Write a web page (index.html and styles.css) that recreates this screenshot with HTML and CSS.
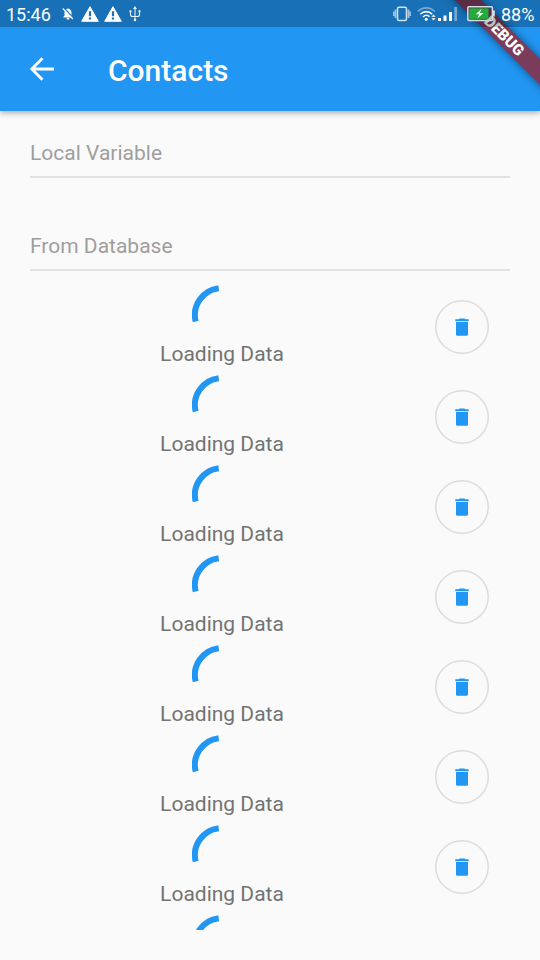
FILE: index.html
```
<!DOCTYPE html>
<html lang="en">
<head>
<meta charset="utf-8">
<title>Contacts</title>
<link rel="stylesheet" href="styles.css">
</head>
<body>
<svg class="defs" width="0" height="0">
  <symbol id="arc" viewBox="0 0 60 60"><path d="M3.7 36.6A27 27 0 0 1 26.7 3.2" fill="none" stroke="#2196f3" stroke-width="6"/></symbol>
  <symbol id="trash" viewBox="0 0 54 54"><circle cx="27" cy="27" r="26.250" fill="none" stroke="#dcdcdc" stroke-width="1.500"/><path d="M21 22h12v12.200q0 1.500-1.500 1.500h-9q-1.500 0-1.500-1.500z" fill="#2196f3"/><path d="M20.300 19.200h3.400l.8-.8h5l.8.8h3.400v2H20.300z" fill="#2196f3"/></symbol>
  <symbol id="warn" viewBox="0 0 18 16"><path d="M9 .7 17.300 15.300H.7z" fill="#fff" stroke="#fff" stroke-width="1" stroke-linejoin="round"/><path d="M9 5.200v5M9 11.600v2" stroke="#1971b6" stroke-width="2.200"/></symbol>
</svg>
<div class="screen">
  <header class="appbar">
    <svg class="back" viewBox="0 0 36 36"><path d="M30 18H8M18.500 7.300 7.800 18 18.500 28.700" fill="none" stroke="#fff" stroke-width="2.800"/></svg>
    <h1 class="title">Contacts</h1>
  </header>
  <main class="body">
    <div class="field first">Local Variable</div>
    <div class="field second">From Database</div>
    <div class="list">
      <div class="row"><div class="loading"><svg class="spinner"><use href="#arc"/></svg><span>Loading Data</span></div><button class="delete"><svg><use href="#trash"/></svg></button></div>
      <div class="row"><div class="loading"><svg class="spinner"><use href="#arc"/></svg><span>Loading Data</span></div><button class="delete"><svg><use href="#trash"/></svg></button></div>
      <div class="row"><div class="loading"><svg class="spinner"><use href="#arc"/></svg><span>Loading Data</span></div><button class="delete"><svg><use href="#trash"/></svg></button></div>
      <div class="row"><div class="loading"><svg class="spinner"><use href="#arc"/></svg><span>Loading Data</span></div><button class="delete"><svg><use href="#trash"/></svg></button></div>
      <div class="row"><div class="loading"><svg class="spinner"><use href="#arc"/></svg><span>Loading Data</span></div><button class="delete"><svg><use href="#trash"/></svg></button></div>
      <div class="row"><div class="loading"><svg class="spinner"><use href="#arc"/></svg><span>Loading Data</span></div><button class="delete"><svg><use href="#trash"/></svg></button></div>
      <div class="row"><div class="loading"><svg class="spinner"><use href="#arc"/></svg><span>Loading Data</span></div><button class="delete"><svg><use href="#trash"/></svg></button></div>
      <div class="row partial"><div class="loading"><svg class="spinner"><use href="#arc"/></svg></div></div>
    </div>
  </main>
  <div class="banner">DEBUG</div>
  <div class="status">
    <span class="time">15:46</span>
    <svg class="bell" viewBox="0 0 12 14"><path d="M6 1.500c2.400.3 3.500 2 3.500 4.300v2.700l1.500 2h-10l1.500-2V5.800c0-2.300 1.100-4 3.500-4.300z" fill="#fff"/><path d="M4.700 11.700h2.600" stroke="#fff" stroke-width="1.500"/><path d="M1.700.8 11.700 11.300" stroke="#1971b6" stroke-width="1.300"/><path d="M.8 1.500 10.800 12" stroke="#fff" stroke-width="1.200"/></svg>
    <svg class="warn"><use href="#warn"/></svg>
    <svg class="warn next"><use href="#warn"/></svg>
    <svg class="usb" viewBox="0 0 12 16"><path d="M6 2v12M1.500 5v3.500q0 2 2 2H6M10.500 4.500v4q0 2-2 2H6" fill="none" stroke="#e6f0f8" stroke-width="1.100"/><path d="M6 0 8 3H4zM.5 4.200h2v2H.5zM9.500 4.200h2v2H9.500z" fill="#e6f0f8"/><circle cx="6" cy="14" r="1.300" fill="#e6f0f8"/></svg>
    <svg class="vibrate" viewBox="0 0 18 16"><rect x="4.500" y="1.200" width="9" height="13.200" rx="1.500" fill="none" stroke="#d4e4f2" stroke-width="1.500"/><path d="M2.500 3.500v8.500M15.500 3.500v8.500" stroke="#9fc3e1" stroke-width="1.800"/><path d="M.9 5.500v4.500M17.100 5.500v4.500" stroke="#b5d0e7" stroke-width="1.400"/></svg>
    <svg class="wifi" viewBox="0 0 20 16"><path d="M.8 5.500C5.500.6 13 .6 17.800 5.500" fill="none" stroke="#75aad3" stroke-width="1.600"/><path d="M3.400 8.200c3.400-3.400 8.400-3.400 11.800 0M6 11c2-2 4.700-2 6.500-.3" fill="none" stroke="#fff" stroke-width="1.600"/><circle cx="9.200" cy="13.300" r="1.500" fill="#fff"/><path d="m14.300 10.700 2.200-2.200 2.200 2.200zM14.300 12.300l2.200 2.200 2.200-2.200z" fill="#fff"/></svg>
    <svg class="signal" viewBox="0 0 20 16"><path d="M0 12h3v3H0zM5.500 9.500h3V15h-3zM11 6h3v9h-3z" fill="#fff"/><path d="M16.300 1h2.700v14h-2.700z" fill="#75a9d3"/></svg>
    <svg class="battery" viewBox="0 0 28 16"><rect x=".8" y=".8" width="24.600" height="13.600" rx="1" fill="none" stroke="#d6dce5" stroke-width="1.500"/><path d="M26.200 4.500h1.500v6h-1.500z" fill="#fff"/><path d="M2.200 2.300h19.300v10.600H2.200z" fill="#23ac38"/><path d="M14.600 2.800 8.800 8.200h3.400L10.300 12.600 16.500 7h-3.700z" fill="#fff"/></svg>
    <span class="percent">88%</span>
  </div>
</div>
</body>
</html>
```

FILE: styles.css
```
* { box-sizing: border-box; }
body { margin: 0; font-family: Roboto, sans-serif; }
.defs { position: absolute; }
.screen { position: relative; width: 540px; height: 960px; overflow: hidden; background: #fafafa; display: flex; flex-direction: column; }
.appbar { position: relative; z-index: 1; flex: none; height: 111px; padding: 27px 24px 0; display: flex; align-items: center; background: #2196f3; box-shadow: 0 2px 6px rgba(0,0,0,.32); }
.back { width: 36px; height: 36px; }
.title { margin: 3px 0 0 48px; font-size: 30px; line-height: 36px; font-weight: 500; color: #fff; }
.body { flex: 1; display: flex; flex-direction: column; padding: 0 30px 30px; min-height: 0; }
.field { flex: none; color: #9e9e9e; font-size: 21px; line-height: 25px; border-bottom: 2px solid #e2e2e2; }
.first { height: 67px; padding-top: 30px; }
.second { height: 93px; padding-top: 56px; }
.list { flex: 1; min-height: 0; overflow: hidden; padding-top: 11px; }
.row { height: 90px; display: flex; align-items: center; padding-right: 21px; }
.loading { flex: 1; height: 90px; padding-top: 3px; margin-right: 21px; display: flex; flex-direction: column; align-items: center; color: #737373; font-size: 21px; line-height: 25px; }
.partial { padding-right: 75px; }
.spinner { width: 60px; height: 60px; flex: none; margin-bottom: -3px; }
.delete { width: 54px; height: 54px; flex: none; padding: 0; border: 0; background: transparent; }
.delete svg { display: block; width: 54px; height: 54px; }
.banner { position: absolute; z-index: 2; left: 414px; top: 27px; width: 180px; height: 18px; transform: rotate(45deg); background: rgba(156,24,34,.73); box-shadow: 0 0 9px rgba(0,0,0,.5); color: #fff; text-align: center; font-size: 15.3px; line-height: 18px; font-weight: 900; }
.status { position: absolute; z-index: 3; left: 0; top: 0; width: 540px; height: 27px; padding-left: 6px; display: flex; align-items: center; background: rgba(0,0,0,.25); color: #fff; font-size: 18px; line-height: 27px; }
.time { width: 56px; padding-top: 1px; }
.bell { width: 12px; height: 14px; }
.warn { width: 18px; height: 16px; margin-left: 7px; }
.next { margin-left: 5px; }
.usb { width: 12px; height: 16px; margin-left: 7px; }
.vibrate { width: 18px; height: 16px; margin-left: 252px; }
.wifi { width: 20px; height: 16px; margin-left: 6px; }
.signal { width: 20px; height: 16px; margin-left: 1px; }
.battery { width: 28px; height: 16px; margin-left: 9px; }
.percent { margin-left: 6px; padding-top: 1px; }
```
